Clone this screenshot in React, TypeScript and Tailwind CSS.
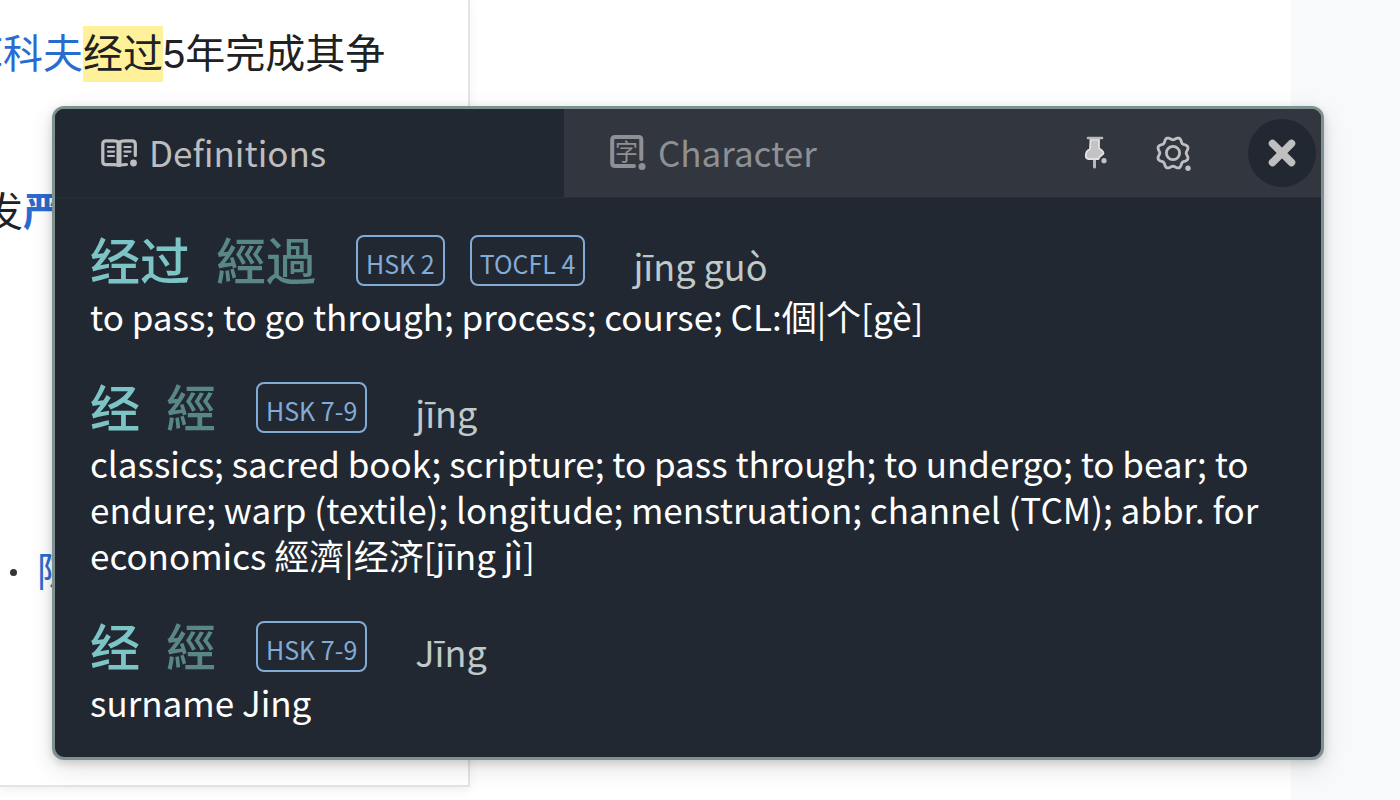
import type { ReactNode } from "react";

type Entry = {
  simplified: string;
  traditional: string;
  levels: string[];
  pinyin: string;
  meaning: string;
};

const entries: Entry[] = [
  {
    simplified: "经过",
    traditional: "經過",
    levels: ["HSK 2", "TOCFL 4"],
    pinyin: "jīng guò",
    meaning: "to pass; to go through; process; course; CL:個|个[gè]",
  },
  {
    simplified: "经",
    traditional: "經",
    levels: ["HSK 7-9"],
    pinyin: "jīng",
    meaning:
      "classics; sacred book; scripture; to pass through; to undergo; to bear; to endure; warp (textile); longitude; menstruation; channel (TCM); abbr. for economics 經濟|经济[jīng jì]",
  },
  {
    simplified: "经",
    traditional: "經",
    levels: ["HSK 7-9"],
    pinyin: "Jīng",
    meaning: "surname Jing",
  },
];

function BookIcon() {
  return (
    <svg className="h-7 w-9 shrink-0" viewBox="0 0 36 28" fill="none" stroke="currentColor" strokeLinecap="round" aria-hidden="true">
      <path d="M18 3.5C16.5 2.2 14.8 1.8 12.5 1.8H5C3 1.8 1.8 3 1.8 5V22.5C1.8 24.5 3 25.7 5 25.7H12.5C15 25.7 16.5 25.8 18 26.5C19.5 25.8 21 25.7 25.5 25.5" strokeWidth="3.2" />
      <path d="M18 3.5C19.5 2.2 21.2 1.8 23.5 1.8H31C33 1.8 34.3 3 34.3 5V16.5" strokeWidth="3.2" />
      <path d="M18 4V25.5" strokeWidth="5" />
      <path d="M7 8H13M7 12.6H13M7 17H13M23.5 8H29.5M23.5 12.6H29.5M23.5 17H26" strokeWidth="2.2" />
      <circle cx="32.5" cy="24" r="3.4" fill="currentColor" stroke="none" />
    </svg>
  );
}

function CharacterIcon() {
  return (
    <svg className="h-9 w-9 shrink-0" viewBox="0 0 36 36" fill="none" stroke="currentColor" strokeLinecap="round" aria-hidden="true">
      <path d="M31.3 24V4.5C31.3 3 30.5 2 28.5 2H5C3.2 2 2.2 3 2.2 4.8V28C2.2 29.8 3.2 31 5 31H24" strokeWidth="4" />
      <circle cx="32" cy="31.5" r="3.5" fill="currentColor" stroke="none" />
      <text x="16.5" y="25" textAnchor="middle" fontSize="23" fill="currentColor" stroke="none">
        字
      </text>
    </svg>
  );
}

function PinIcon() {
  return (
    <svg className="h-9 w-9" viewBox="0 0 36 36" fill="none" strokeLinecap="round" strokeLinejoin="round" aria-hidden="true">
      <path d="M17.5 24V32" strokeWidth="3" stroke="#b9b9bc" />
      <path d="M13.5 4.5H22V13.5C23.5 14 26.5 16.5 26.5 18.2C26.5 20 22.5 20 21.5 24H11.5C9.5 24 8.8 22.5 8.8 20.5C8.8 16.5 10.5 15 13 14Z" strokeWidth="1.8" fill="#c3c3c6" stroke="#e2e2e4" />
      <path d="M11 3H25" strokeWidth="2.6" stroke="#b9b9bc" />
      <circle cx="27" cy="25.7" r="2.6" fill="#c3c3c6" />
    </svg>
  );
}

// Eight rounded teeth, with a notch facing straight up.
const gearPath =
  Array.from({ length: 120 }, (_, i) => {
    const angle = (i / 120) * Math.PI * 2;
    const radius = 14.6 - 1.4 * Math.cos(angle * 8);
    const x = 18 + radius * Math.sin(angle);
    const y = 18 - radius * Math.cos(angle);
    return `${i === 0 ? "M" : "L"}${x.toFixed(2)} ${y.toFixed(2)}`;
  }).join("") + "Z";

function GearIcon() {
  return (
    <svg className="h-9 w-9" viewBox="0 0 36 36" fill="none" stroke="currentColor" strokeWidth="2.8" strokeLinejoin="round" aria-hidden="true">
      <path d={gearPath} />
      <circle cx="18" cy="18" r="6.6" />
      <circle cx="33" cy="33.2" r="2.7" fill="currentColor" stroke="none" />
    </svg>
  );
}

function CloseIcon() {
  return (
    <svg className="h-7 w-7" viewBox="0 0 28 28" fill="none" stroke="currentColor" strokeWidth="7.5" strokeLinecap="round" aria-hidden="true">
      <path d="M4.5 4.5L23.5 23.5M23.5 4.5L4.5 23.5" />
    </svg>
  );
}

function Tab({ active, icon, children }: { active?: boolean; icon: ReactNode; children: ReactNode }) {
  return (
    <button
      type="button"
      role="tab"
      aria-selected={!!active}
      className={
        active
          ? "flex flex-1 items-center gap-3 bg-[#222831] pl-[46px] text-[#bdbdc0]"
          : "flex flex-1 items-center gap-3 pl-[46px] text-[#8f9093]"
      }
    >
      {icon}
      <span className="pb-0.5 text-[35px] leading-[46px]">{children}</span>
    </button>
  );
}

function EntryView({ entry }: { entry: Entry }) {
  return (
    <article>
      <div className="flex h-[66px] items-center">
        <span className="pb-1 text-[50px] leading-[60px] font-medium text-[#7cc4c5]">{entry.simplified}</span>
        <span className="ml-[26px] pb-1 text-[50px] leading-[60px] font-medium text-[#598687]">{entry.traditional}</span>
        <span className="ml-10 flex gap-[25px]">
          {entry.levels.map((level) => (
            <span
              key={level}
              className="flex h-[51px] items-center rounded-lg border-2 border-[#82acd8] px-2 pt-1.5 text-[25px] leading-[38px] text-[#82acd8]"
            >
              {level}
            </span>
          ))}
        </span>
        <span className="ml-12 pt-2.5 text-[36px] leading-[46px] text-[#bfc9c9]">{entry.pinyin}</span>
      </div>
      <p className="text-[35px] leading-[46px] text-white">{entry.meaning}</p>
    </article>
  );
}

function Popup() {
  return (
    <section
      aria-label="Dictionary"
      className="absolute top-[106px] right-[76px] left-[52px] overflow-hidden rounded-xl border-3 border-[#7d9190] bg-[#222831] pb-8 shadow-[0_8px_24px_rgba(0,0,0,0.12),0_3px_8px_rgba(0,0,0,0.15)]"
    >
      <header className="flex h-[89px] border-b border-[#2a2d36] bg-[#32363f]">
        <div role="tablist" className="flex flex-1">
          <Tab active icon={<BookIcon />}>
            Definitions
          </Tab>
          <Tab icon={<CharacterIcon />}>Character</Tab>
        </div>
        <div className="flex w-[248px] items-center justify-end text-[#bfbfc2]">
          <button type="button" aria-label="Pin" className="mr-[42px]">
            <PinIcon />
          </button>
          <button type="button" aria-label="Settings" className="mr-[57px]">
            <GearIcon />
          </button>
          <button
            type="button"
            aria-label="Close"
            className="mr-[5px] flex h-[68px] w-[68px] items-center justify-center rounded-full bg-[#222831]"
          >
            <CloseIcon />
          </button>
        </div>
      </header>
      <div className="flex flex-col gap-[35px] px-[35px] pt-[29px]">
        {entries.map((entry) => (
          <EntryView key={entry.pinyin} entry={entry} />
        ))}
      </div>
    </section>
  );
}

export default function App() {
  return (
    <div
      lang="zh-CN"
      className="relative flex h-screen overflow-hidden bg-white font-['Noto_Sans_CJK_SC',sans-serif]"
    >
      <main className="flex-1">
        <div className="h-[787px] w-[470px] overflow-hidden border-r-2 border-b-2 border-[#e4e4e4] font-['Liberation_Sans','Noto_Sans_CJK_SC',sans-serif] text-[40px] leading-[60px] text-[#202122] shadow-[0_4px_10px_rgba(0,0,0,0.06)]">
          <p className="-ml-[37px] pt-6 whitespace-nowrap">
            <a href="#kov" className="text-[#2a6bd0]">
              库科夫
            </a>
            <mark className="bg-[#fff09a] py-1.5 text-[#202122]">经过</mark>
            5年完成其争
          </p>
          <p className="-ml-[17px] pt-[98px] whitespace-nowrap">
            发
            <a href="#yan" className="font-bold text-[#2a6bd0]">
              严
            </a>
          </p>
          <ul className="flex pt-[300px]">
            <li className="flex items-center gap-5 pl-[10px] whitespace-nowrap">
              <span className="h-[7px] w-[7px] rounded-full bg-[#333333]" />
              <a href="#chen" className="text-[#2a6bd0]">
                陈
              </a>
            </li>
          </ul>
        </div>
      </main>
      <aside className="w-[109px] bg-[#f8f9fb]" />
      <Popup />
    </div>
  );
}
